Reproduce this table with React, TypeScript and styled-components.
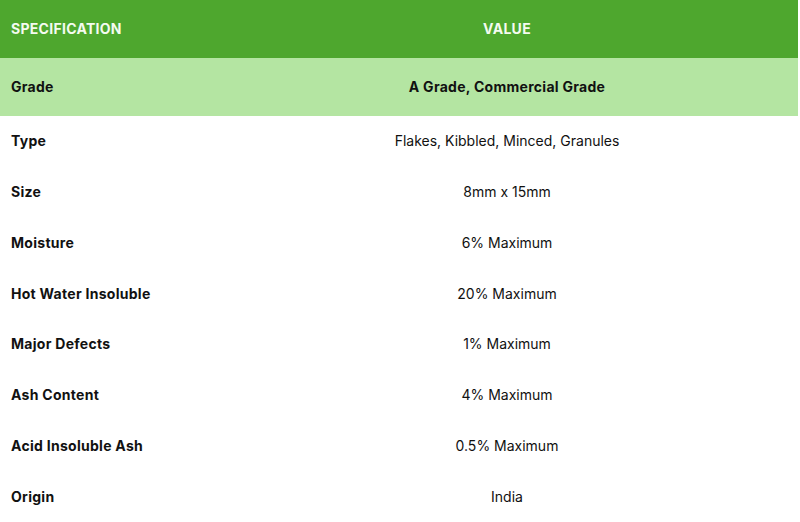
import React from "react";
import styled, { createGlobalStyle } from "styled-components";

const Global = createGlobalStyle`
  html, body { margin: 0; padding: 0; background: #ffffff; }
  body { font-family: Inter, "Noto Sans", sans-serif; color: #111111; }
`;

const Table = styled.div`
  width: 798px;
  display: grid;
  grid-template-columns: 216px 1fr;
`;

type Variant = "head" | "hl" | "plain";

const Cell = styled.div<{ $variant: Variant; $center?: boolean }>`
  display: flex;
  align-items: center;
  justify-content: ${(p) => (p.$center ? "center" : "flex-start")};
  padding: 0 11px 2px;
  height: ${(p) => (p.$variant === "plain" ? "50.86px" : "58px")};
  font-size: 14px;
  font-weight: ${(p) => (p.$variant === "plain" && p.$center ? 400 : 700)};
  letter-spacing: ${(p) => (p.$variant === "plain" && p.$center ? "0" : "0.28px")};
  background: ${(p) =>
    p.$variant === "head" ? "#4ea72e" : p.$variant === "hl" ? "#b4e5a2" : "#ffffff"};
  color: ${(p) => (p.$variant === "head" ? "#f4fbf0" : "#111111")};
  text-transform: ${(p) => (p.$variant === "head" ? "uppercase" : "none")};
  box-sizing: border-box;
  white-space: nowrap;
`;

const rows: [string, string][] = [
  ["Type", "Flakes, Kibbled, Minced, Granules"],
  ["Size", "8mm x 15mm"],
  ["Moisture", "6% Maximum"],
  ["Hot Water Insoluble", "20% Maximum"],
  ["Major Defects", "1% Maximum"],
  ["Ash Content", "4% Maximum"],
  ["Acid Insoluble Ash", "0.5% Maximum"],
  ["Origin", "India"],
];

export default function App() {
  return (
    <>
      <Global />
      <Table>
        <Cell $variant="head">Specification</Cell>
        <Cell $variant="head" $center>Value</Cell>
        <Cell $variant="hl">Grade</Cell>
        <Cell $variant="hl" $center>A Grade, Commercial Grade</Cell>
        {rows.map(([k, v]) => (
          <React.Fragment key={k}>
            <Cell $variant="plain">{k}</Cell>
            <Cell $variant="plain" $center>{v}</Cell>
          </React.Fragment>
        ))}
      </Table>
    </>
  );
}
